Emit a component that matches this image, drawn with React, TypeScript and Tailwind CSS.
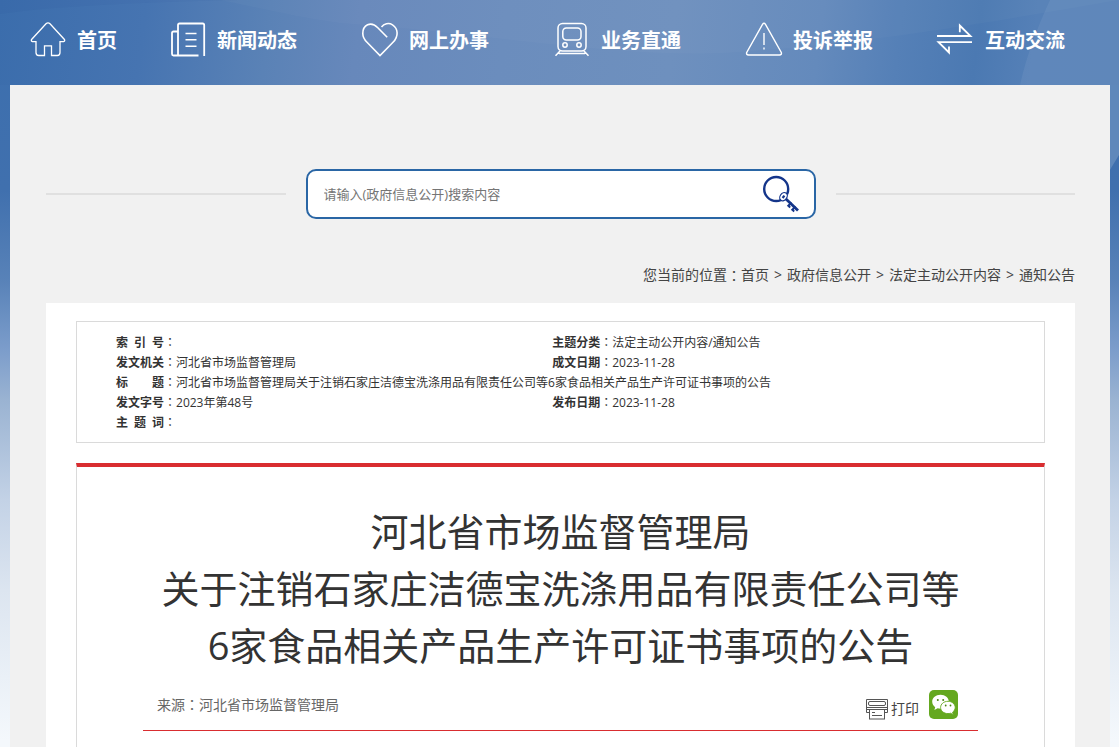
import { ReactNode } from 'react';

const NAV: { label: string; icon: ReactNode }[] = [
  {
    label: '首页',
    icon: (
      <path d="M16 2.8 Q18 1 20 2.8 L34.2 18.2 Q35.5 20 33.5 20.6 H30 V31.5 Q30 34.5 27.3 34.5 H21.5 V24.8 H14.5 V34.5 H8.7 Q6 34.5 6 31.5 V20.6 H2.5 Q.5 20 1.8 18.2 Z" strokeWidth="1.3" />
    ),
  },
  {
    label: '新闻动态',
    icon: (
      <>
        <path d="M34.2 35 V4 Q34.2 2.5 32.7 2.5 H9.5 Q8 2.5 8 4 V34.5 M8 10.5 H3.5 Q2 10.5 2 12 V33 Q2 34.5 3.5 34.5 H28.5" strokeWidth="1.8" />
        <path d="M15.5 12.5 H26.5 M15.5 18.8 H26.5 M15.5 25.2 H26.5" strokeWidth="1.6" />
      </>
    ),
  },
  {
    label: '网上办事',
    icon: (
      <path d="M25.2 16.3 L15.8 6.8 C8.5 -.7 .8 4.5 .8 12.5 C.8 15.8 2.5 18.8 5 21.3 L18 34.5 L31 21.3 C36.8 15.3 36.3 7.5 30.5 3.8 C26.5 1.3 22 2.9 19.5 6" strokeWidth="1.6" />
    ),
  },
  {
    label: '业务直通',
    icon: (
      <>
        <rect x="4" y="2.5" width="28" height="27.5" rx="4.5" />
        <rect x="8.8" y="7" width="18.2" height="12" rx="3.5" />
        <circle cx="11" cy="24" r="2.2" />
        <circle cx="25" cy="24" r="2.2" />
        <path d="M6 30 L1.5 34.8 M30 30 L34.5 34.8 M5 32.5 H31" />
      </>
    ),
  },
  {
    label: '投诉举报',
    icon: (
      <>
        <path d="M16.5 3.3 Q18 1.3 19.5 3.3 L35.3 31.5 Q36 33.8 33.5 34 H2.5 Q0 33.8 .7 31.5 Z" strokeWidth="1.4" />
        <path d="M18 12 V24 M18 26.5 V28.5" strokeWidth="1.4" />
      </>
    ),
  },
  {
    label: '互动交流',
    icon: (
      <path d="M-1 15 H32.5 L21.8 4.5 V11.3 M34 21.2 H.5 L11 31.5 V25.5" strokeWidth="1.8" />
    ),
  },
];

const CRUMBS = ['首页', '政府信息公开', '法定主动公开内容', '通知公告'];

const TITLE = [
  '河北省市场监督管理局',
  '关于注销石家庄洁德宝洗涤用品有限责任公司等',
  '6家食品相关产品生产许可证书事项的公告',
];

// full-width colon set in the middle of its square
function Colon() {
  return <span className="font-['Noto_Sans_CJK_TC',sans-serif] leading-none">：</span>;
}

function Field({ label, value }: { label: string; value?: string }) {
  return (
    <>
      <b className="inline-block w-12 [text-align-last:justify]">{label}</b>
      <Colon />
      {value}
    </>
  );
}

function KeyIcon() {
  return (
    <svg width="38" height="38" viewBox="0 0 38 38" fill="none" stroke="#14358a">
      <circle cx="14.2" cy="14" r="12" strokeWidth="2.4" />
      <path d="M24 24 L36 35.5" strokeWidth="2.8" />
      <path d="M29.5 27.5 L26.3 30.8 L28.2 32.5 M33.5 31.5 L30.3 34.8 L32.2 36.5" strokeWidth="2" />
      <ellipse cx="21.5" cy="21.7" rx="3.4" ry="4.4" transform="rotate(35 21.5 21.7)" fill="#fff" strokeWidth="1.2" />
      <path d="M20.6 23 L22.4 20.6" strokeWidth="2.2" />
    </svg>
  );
}

function PrinterIcon() {
  return (
    <svg width="22" height="21" viewBox="0 0 22 21" fill="none" stroke="#555">
      <path d="M3.5 13.5 H.5 V.5 H21.5 V13.5 H18.5" />
      <rect x="2.5" y="2.5" width="17" height="4" rx="1.5" />
      <path d="M1 8.5 H21 M1 10.5 H21" />
      <rect x="3.5" y="10.5" width="15" height="9.5" fill="#fff" />
      <path d="M6 13.5 H9 M6 16.5 H16" />
    </svg>
  );
}

function WechatIcon() {
  return (
    <svg width="29" height="29" viewBox="0 0 29 29">
      <rect width="29" height="29" rx="5" fill="#64a81f" />
      <path d="M11.5 4.8 C6.8 4.8 3.2 7.9 3.2 11.8 C3.2 14 4.4 15.9 6.2 17.2 L5.4 19.9 L8.6 18.3 C9.5 18.6 10.5 18.7 11.5 18.7 C16.2 18.7 19.8 15.6 19.8 11.8 C19.8 7.9 16.2 4.8 11.5 4.8 Z" fill="#fff" />
      <path d="M19 11.3 C14.8 11.3 11.6 14 11.6 17.5 C11.6 20.9 14.8 23.6 19 23.6 C19.9 23.6 20.7 23.5 21.5 23.2 L24.3 24.7 L23.6 22.2 C25.2 21 26.2 19.4 26.2 17.5 C26.2 14 23 11.3 19 11.3 Z" fill="#fff" stroke="#64a81f" strokeWidth=".9" />
      <g fill="#4b8414">
        <circle cx="8.8" cy="10" r="1" />
        <circle cx="14.2" cy="10" r="1" />
        <circle cx="16.7" cy="15.5" r=".9" />
        <circle cx="21.5" cy="15.5" r=".9" />
      </g>
    </svg>
  );
}

// blue sky that fades to white down the page, with soft light beams behind the nav
function Backdrop() {
  return (
    <div className="absolute inset-0 -z-10 bg-[linear-gradient(180deg,#3c6fae_0px,#4070ae_190px,#5882b8_280px,#7c9dcb_350px,#9ab3d2_400px,#c3d2e6_500px,#dce5f0_590px,#f4f8fc_740px)]">
      <div className="h-[85px] bg-[linear-gradient(97deg,#3b6dac_0%,#4674b1_13%,#5a82b6_24%,#6788bb_32%,#6b8dbd_45%,#6e90be_60%,#648abc_73%,#5580b7_80%,#4b79b2_87%,#5580b7_92%,#5680b6_100%)]">
        <svg className="h-[180px] w-full" viewBox="0 0 1119 180" preserveAspectRatio="none">
          <path d="M220 0 C260 8 300 18 340 23 C500 34 620 60 740 52 C900 40 1000 20 1119 0 Z" fill="#fff" opacity=".025" />
          <path d="M1050 0 C1036 30 1026 58 1020 85 H1119 V0 Z" fill="#fff" opacity=".06" />
          <path d="M0 0 H240 C160 2 60 5 0 14 Z" fill="#123a7a" opacity=".04" />
          <path d="M1105 85 H1119 V155 L1105 178 Z" fill="#5f88bb" />
        </svg>
      </div>
    </div>
  );
}

export default function App() {
  return (
    <div className="relative isolate min-h-screen font-['Open_Sans','Noto_Sans_CJK_SC',sans-serif] text-[#333]">
      <Backdrop />
      <div className="flex min-h-screen flex-col pr-[9px] pl-2.5">
        <nav className="flex h-[85px] items-start">
          {NAV.map((item, i) => (
            <a
              key={item.label}
              href="#"
              className={
                'flex h-20 items-center gap-[11px] pl-5 text-xl font-bold whitespace-nowrap text-white ' +
                (i === 0 ? 'w-[140px]' : 'flex-1')
              }
            >
              <svg className="shrink-0 overflow-visible" width="36" height="38" viewBox="0 0 36 38" fill="none" stroke="#fff" strokeWidth="1.5">
                {item.icon}
              </svg>
              <span className="pt-0.5">{item.label}</span>
            </a>
          ))}
        </nav>

        <main className="flex flex-1 flex-col bg-[#f1f1f1] pr-[35px] pl-9">
          <form className="mt-21 flex items-center gap-5" onSubmit={(e) => e.preventDefault()}>
            <div className="h-0.5 flex-1 bg-[#e0e0e0]" />
            <div className="flex h-[50px] w-[510px] items-center rounded-[10px] border-2 border-[#2a66a5] bg-white pr-3.5 pl-4">
              <input
                type="text"
                aria-label="搜索"
                placeholder="请输入(政府信息公开)搜索内容"
                className="min-w-0 flex-1 pt-0.5 text-[13px] outline-none placeholder:text-[#757575]"
              />
              <button type="submit" aria-label="提交搜索">
                <KeyIcon />
              </button>
            </div>
            <div className="h-0.5 flex-1 bg-[#e0e0e0]" />
          </form>

          <div className="mt-[46px] flex items-center justify-end text-sm leading-5 text-[#444]">
            您当前的位置
            <Colon />
            {CRUMBS.map((c, i) => (
              <span key={c}>
                {i > 0 && <span className="mx-[5px]">&gt;</span>}
                <a href="#">{c}</a>
              </span>
            ))}
          </div>

          <div className="mt-[18px] flex flex-1 flex-col bg-white px-[30px] pt-[18px]">
            <div className="border border-[#dadada] pt-[11px] pb-[9px] pl-[39px]">
              <table className="w-full table-fixed text-xs leading-5">
                <tbody>
                  <tr>
                    <td className="w-[47%]"><Field label="索 引 号" /></td>
                    <td><Field label="主题分类" value="法定主动公开内容/通知公告" /></td>
                  </tr>
                  <tr>
                    <td><Field label="发文机关" value="河北省市场监督管理局" /></td>
                    <td><Field label="成文日期" value="2023-11-28" /></td>
                  </tr>
                  <tr>
                    <td colSpan={2}><Field label="标 题" value={TITLE.join('')} /></td>
                  </tr>
                  <tr>
                    <td><Field label="发文字号" value="2023年第48号" /></td>
                    <td><Field label="发布日期" value="2023-11-28" /></td>
                  </tr>
                  <tr>
                    <td colSpan={2}><Field label="主 题 词" /></td>
                  </tr>
                </tbody>
              </table>
            </div>

            <article className="mt-5 flex-1 border-x border-t-4 border-x-[#dadada] border-t-[#d92d30] px-[66px] pt-9">
              <h1 className="text-center text-[38px] leading-[57px] text-[#333]">
                {TITLE.map((line) => (
                  <span key={line} className="block">{line}</span>
                ))}
              </h1>
              <div className="flex h-[57px] items-center border-b border-b-[#d92d30] pt-2 pr-5 pl-3.5 text-sm text-[#666]">
                <span className="flex-1 pb-0.5">
                  来源
                  <Colon />
                  河北省市场监督管理局
                </span>
                <button type="button" className="flex items-center gap-[3px] pt-1.5 text-[#444]">
                  <PrinterIcon />
                  打印
                </button>
                <button type="button" aria-label="微信" className="ml-2.5 pb-1">
                  <WechatIcon />
                </button>
              </div>
            </article>
          </div>
        </main>
      </div>
    </div>
  );
}
